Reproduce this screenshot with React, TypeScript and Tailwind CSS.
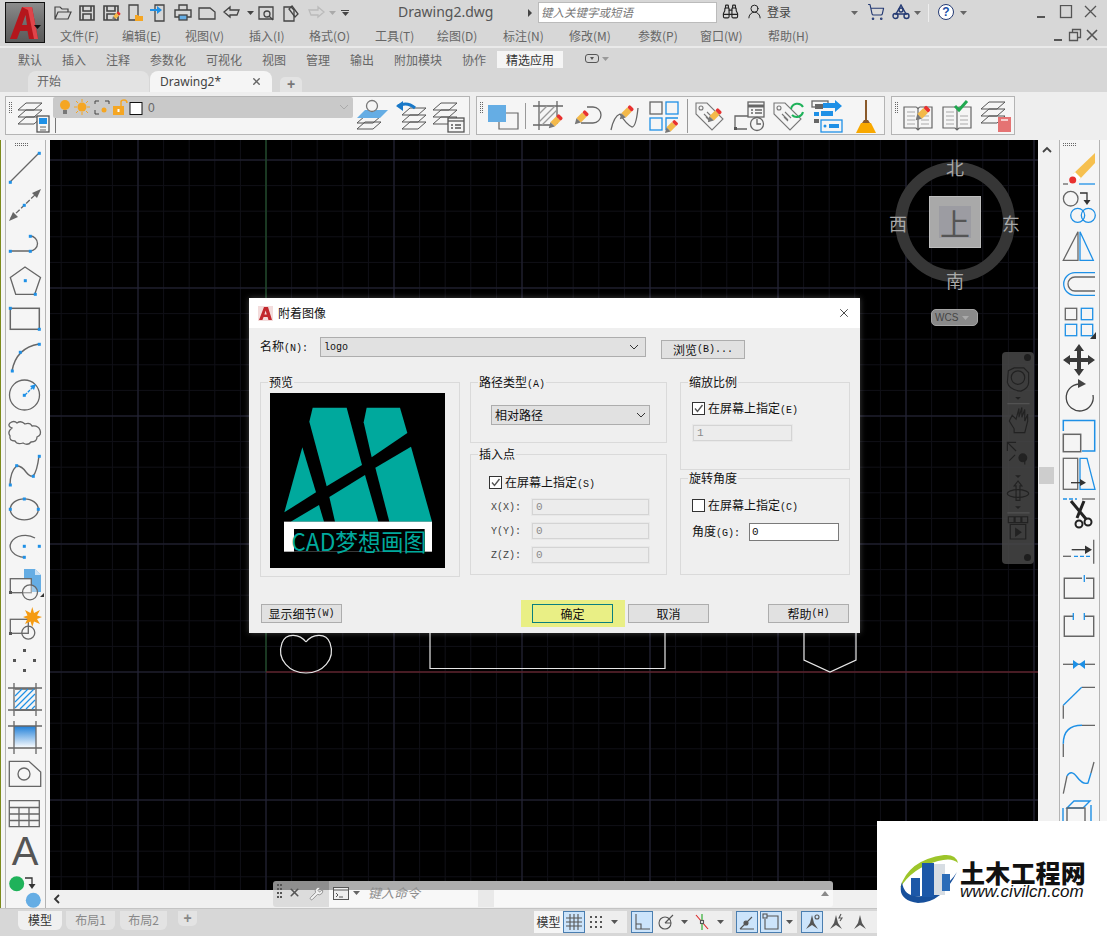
import type { ReactNode } from 'react'
import { Binoculars, ShoppingCart, UserRound, Wrench, X } from 'lucide-react'

const cjk = "font-['Noto_Sans_CJK_SC','Noto_Sans',sans-serif]"

function Ic({ s = 38, h, children }: { s?: number; h?: number; children: ReactNode }) {
  return (
    <svg width={s} height={h ?? s} viewBox={`0 0 ${s} ${h ?? s}`} fill="none" stroke="#666" strokeWidth="1.3" className="block overflow-visible shrink-0">
      {children}
    </svg>
  )
}

// small blue grip handle
const G = ({ x, y }: { x: number; y: number }) => <rect x={x - 1.5} y={y - 1.5} width="3" height="3" fill="#1e90e6" stroke="none" />

const Caret = ({ c = '#666' }: { c?: string }) => (
  <svg width="7" height="4" viewBox="0 0 7 4" className="block shrink-0"><polygon points="0,0 7,0 3.5,4" fill={c} /></svg>
)

const Pencil = ({ x, y, k = 1 }: { x: number; y: number; k?: number }) => (
  <g transform={`translate(${x} ${y}) rotate(45) scale(${k})`} stroke="none">
    <rect x="-3.5" y="-10" width="7" height="9" fill="#f3b94a" />
    <rect x="-3.5" y="-14" width="7" height="4" fill="#e8312f" rx="1.5" />
    <polygon points="-3.5,-1 3.5,-1 0,5" fill="#777" />
  </g>
)

const Sheet = ({ y }: { y: number }) => <path d={`M1 ${y + 7}L9 ${y}H25M1 ${y + 7}H17L25 ${y}`} stroke="#555" strokeWidth="1" />

const Tag = () => (
  <g stroke="#777" strokeWidth="1.1">
    <path d="M2 3H13L29 19L18 30L2 14Z" />
    <circle cx="7" cy="8" r="2" />
    <path d="M10 14L16 20M13 12L19 18M12 17L16 21" />
  </g>
)

const Book = () => (
  <g stroke="#666" strokeWidth="1.2">
    <path d="M2 7H14Q15 7 16 9Q17 7 18 7H30V28H18L16 30L14 28H2ZM16 9V29" />
    <path d="M5 12H13M5 16H13M5 20H13M5 24H13M19 16H27M19 20H27M19 24H27" stroke="#aaa" />
  </g>
)

const leftIcons: ReactNode[] = [
  <><path d="M4 34L33 5" /><G x={4.3} y={34.3} /><G x={33.3} y={5.3} /></>,
  <><path d="M5 32L32 6" strokeDasharray="5 2" /><polygon points="3,35 12,31 7,26" fill="#666" stroke="none" /><polygon points="35,3 26,7 31,12" fill="#666" stroke="none" /><G x={18.3} y={19.3} /></>,
  <><path d="M4 27H24M24 12A7.5 7.5 0 0 1 24 27" /><G x={4.3} y={27.3} /><G x={24.3} y={27.3} /><G x={24.3} y={12.3} /></>,
  <><polygon points="19,5 34.5,15.5 28.7,32.3 9.7,32.3 4.3,15.5" /><G x={19.3} y={18.7} /><G x={29.3} y={32.3} /></>,
  <><rect x="4.3" y="8.3" width="29" height="21" strokeWidth="1.5" /><G x={4.3} y={8.3} /><G x={33.3} y={29.3} /></>,
  <><path d="M6 33Q10 10 33 6" strokeWidth="1.5" /><G x={6.3} y={33} /><G x={14.3} y={14.3} /><G x={33.3} y={6.3} /></>,
  <><circle cx="18.5" cy="19" r="15" /><path d="M19 19L27 11" stroke="#1e90e6" strokeDasharray="3 1" /><polygon points="30,8 24,10 28,14" fill="#1e90e6" stroke="none" /><G x={18.3} y={19.3} /></>,
  <path d="M6 14Q1 12 4 9Q8 6 11 9Q15 6 19 10Q24 8 26 12Q32 11 34 16Q36 21 31 23Q31 28 25 28Q22 32 17 29Q11 31 9 27Q3 27 4 22Q1 18 6 14Z" />,
  <><path d="M4 33Q4 20 10.7 13.7Q16 14 20 20Q24 25 27 24Q31 20 33 4" strokeWidth="1.4" /><G x={4.3} y={33} /><G x={10.7} y={13.7} /><G x={27.3} y={24.3} /><G x={33.3} y={4.3} /></>,
  <><ellipse cx="18.3" cy="19.3" rx="14" ry="10.5" /><G x={18.3} y={9} /><G x={4.3} y={19.3} /><G x={32.3} y={19.3} /></>,
  <><path d="M29 10A15 11 0 1 0 18.3 29.3" /><G x={18.3} y={18.3} /><G x={33.3} y={18.3} /><G x={18.3} y={29.3} /></>,
  <><path d="M18 3H29L35 9V26H18Z" fill="#65ade4" stroke="none" /><path d="M29 3L35 9H29Z" fill="#cde3f5" stroke="none" /><rect x="4.3" y="12.7" width="21" height="14" fill="#f5f5f5" /><circle cx="24" cy="26.3" r="7.5" fill="#f5f5f5" fillOpacity=".4" /><rect x="3" y="25" width="3" height="3" fill="#555" stroke="none" /><polygon points="38,27 38,31 34,31" fill="#333" stroke="none" /></>,
  <><rect x="4.3" y="15.3" width="18" height="14" /><circle cx="22.3" cy="28.7" r="6.5" /><rect x="3" y="28" width="3" height="3" fill="#555" stroke="none" /><polygon points="26.3,3 28,9 34,6 31,11.5 36,13 31,15 34,20 28,17.5 26.3,23 24.5,17.5 19,20 21.5,15 17,13 21.5,11.5 19,6 24.5,9" fill="#f59b12" stroke="none" /></>,
  <g fill="#555" stroke="none"><rect x="17" y="7" width="3" height="3" /><rect x="7" y="17" width="3" height="3" /><rect x="27" y="17" width="3" height="3" /><rect x="17" y="27" width="3" height="3" /></g>,
  <><path d="M9 9L29 9M9 30H29" /><path d="M8 3V36M30 3V36M2 8H36M2 30H36" stroke="#666" /><path d="M9 16L16 9M9 22L22 9M9 28L28 9M14 29L29 14M20 29L29 20M26 29L29 26" stroke="#1e90e6" strokeWidth="1.2" /></>,
  <><defs><linearGradient id="gr" x1="0" y1="0" x2="0" y2="1"><stop offset="0" stopColor="#1f7fd8" /><stop offset="1" stopColor="#fff" /></linearGradient></defs><rect x="8" y="8" width="22" height="22" fill="url(#gr)" stroke="none" /><path d="M8 3V36M30 3V36M2 8H36M2 30H36" /></>,
  <><polygon points="3.3,5.3 23,5.3 34.7,16 34.7,30.3 3.3,30.3" /><circle cx="18" cy="18" r="6" /></>,
  <path d="M3.3 6.7H33.3V32.7H3.3ZM3.3 13.5H33.3M3.3 20H33.3M3.3 26.5H33.3M13 13.5V32.7M23 13.5V32.7" />,
  <text x="19" y="33" textAnchor="middle" fill="#555" stroke="none" fontSize="40" fontFamily="Liberation Sans">A</text>,
  <><circle cx="10.7" cy="13.7" r="7.5" fill="#1fb25a" stroke="none" /><circle cx="27.3" cy="30.3" r="7.5" fill="#65ade4" stroke="none" /><path d="M19 8H26V15" stroke="#333" /><polygon points="22.5,14 29.5,14 26,19" fill="#333" stroke="none" /></>,
]

const blue = '#1e90e6'
const rightIcons: ReactNode[] = [
  <><polygon points="35,2 35,12 19,29 13,23" fill="#f6c04f" stroke="none" /><polygon points="15,21 21,27 18,30 12,24" fill="#fff" stroke="none" /><circle cx="12.7" cy="29" r="3.5" fill="#e8312f" stroke="none" /><path d="M3 33H8" /><path d="M19 33H35" stroke={blue} /></>,
  <><circle cx="10.7" cy="9.7" r="7.3" /><path d="M20 4H27V12" stroke="#333" /><polygon points="23.5,11 30.5,11 27,16" fill="#333" stroke="none" /><circle cx="17.7" cy="26.3" r="7" stroke={blue} /><circle cx="28.3" cy="26.3" r="7" stroke={blue} /></>,
  <><polygon points="18,4.7 18,33.3 3.3,33.3" /><polygon points="20,4.7 20,33.3 33.3,33.3" stroke={blue} /></>,
  <><path d="M35 7.7H15A11.3 11.3 0 0 0 15 30.3H35" stroke={blue} /><path d="M35 12H15A7 7 0 0 0 15 26H35" /></>,
  <><rect x="5.3" y="5.3" width="11.4" height="11.4" /><rect x="21.3" y="5.3" width="11.4" height="11.4" stroke={blue} /><rect x="5.3" y="21.3" width="11.4" height="11.4" stroke={blue} /><rect x="21.3" y="21.3" width="11.4" height="11.4" stroke={blue} /><polygon points="36,29 36,36 30,36" fill="#333" stroke="none" /></>,
  <path d="M19 3L24 10H21V17H28V14L35 19L28 24V21H21V28H24L19 35L14 28H17V21H10V24L3 19L10 14V17H17V10H14Z" fill="#3a3a3a" stroke="none" />,
  <><path d="M19 5A13.5 13.5 0 1 0 33 16" stroke="#444" /><polygon points="18,0 18,9 26,5" fill="#444" stroke="none" /></>,
  <><path d="M3.3 14V3.5H34.7V34H22" stroke={blue} strokeWidth="1.5" /><rect x="3.3" y="17.3" width="17.4" height="17.4" strokeWidth="1.5" /></>,
  <><rect x="3.3" y="3.3" width="14.4" height="31" /><polygon points="20,3.3 27,3.3 35,34.3 20,34.3" stroke={blue} /><path d="M11 27.7H21" stroke="#333" /><polygon points="20,24 26,27.7 20,31" fill="#333" stroke="none" /></>,
  <><path d="M3 6H17" stroke={blue} strokeDasharray="4 2" /><path d="M22 6H35" /><path d="M11 8L26 26M24 8L17 25" stroke="#222" strokeWidth="3" /><circle cx="28" cy="29" r="3.5" stroke="#222" strokeWidth="2" /><circle cx="19" cy="31" r="3.5" stroke="#222" strokeWidth="2" /></>,
  <><path d="M11.7 18.7H26" stroke="#333" /><polygon points="25,14.5 32,18.7 25,23" fill="#333" stroke="none" /><path d="M3 25.3H11" /><path d="M14 25.3H32" stroke={blue} strokeDasharray="4 2" /><path d="M33.7 8.7V32.7" /></>,
  <><path d="M22 9.3H4.3V29.3H33.7V9.3H26" strokeWidth="1.4" /><path d="M24.3 6V13" stroke={blue} /></>,
  <><path d="M13.3 9.3H4.3V29.3H33.7V9.3H24.3" strokeWidth="1.4" /><path d="M13.3 6V13M24.3 6V13" stroke={blue} /></>,
  <><path d="M3 19.3H35" /><polygon points="13,15 19,19.3 13,24" fill={blue} stroke="none" /><polygon points="25,15 19,19.3 25,24" fill={blue} stroke="none" /></>,
  <><path d="M21.7 4.3H35M3.3 22.3V35.7" /><path d="M21.7 4.3L3.3 22.3" stroke={blue} /></>,
  <><path d="M22 4.3H35M3.3 22.7V36" /><path d="M22 4.3Q3.3 4.3 3.3 22.7" stroke={blue} strokeWidth="1.5" /></>,
  <><path d="M3.3 34.7L7 17" /><path d="M7 17Q11 10 17 18T28 24L31 14" stroke={blue} strokeWidth="1.4" /><path d="M31 14L34 3" /></>,
  <g stroke={blue} strokeWidth="1.4"><path d="M7 11L14 4H30L23 11H7ZM3 11V36M31 8V36" /><rect x="7" y="11" width="18" height="22" stroke="#666" /></g>,
]

const menus = [
  ['文件(F)', 'w-[62px]'], ['编辑(E)', 'w-[63px]'], ['视图(V)', 'w-[64px]'], ['插入(I)', 'w-[60px]'],
  ['格式(O)', 'w-[66px]'], ['工具(T)', 'w-[62px]'], ['绘图(D)', 'w-[66px]'], ['标注(N)', 'w-[66px]'],
  ['修改(M)', 'w-[69px]'], ['参数(P)', 'w-[62px]'], ['窗口(W)', 'w-[68px]'], ['帮助(H)', 'w-[60px]'],
]

const ribbonTabs = [
  ['默认', 'w-[44px]'], ['插入', 'w-[44px]'], ['注释', 'w-[44px]'], ['参数化', 'w-[56px]'], ['可视化', 'w-[56px]'],
  ['视图', 'w-[44px]'], ['管理', 'w-[44px]'], ['输出', 'w-[44px]'], ['附加模块', 'w-[68px]'], ['协作', 'w-[35px]'],
]

function Hot({ k }: { k: string }) {
  return <span className="font-['Liberation_Mono',monospace] text-[10px]">{k}</span>
}

function Group({ title, className, children }: { title: ReactNode; className: string; children?: ReactNode }) {
  return (
    <div className={`relative border border-[#dadada] ${className}`}>
      <div className="absolute -top-[9px] left-[7px] bg-[#efefef] px-[1px] leading-[16px] whitespace-nowrap">{title}</div>
      {children}
    </div>
  )
}

function Check({ on }: { on?: boolean }) {
  return (
    <svg width="13" height="13" viewBox="0 0 13 13" className="block shrink-0">
      <rect x=".5" y=".5" width="12" height="12" fill="#fff" stroke="#333" />
      {on && <path d="M3 6.5L5.5 9.5L10.5 3" fill="none" stroke="#555" strokeWidth="1.4" />}
    </svg>
  )
}

const Chevron = () => (
  <svg width="10" height="6" viewBox="0 0 10 6" className="block shrink-0"><path d="M1 1L5 5L9 1" fill="none" stroke="#333" /></svg>
)

function DisabledField({ value, className }: { value: string; className: string }) {
  return <div className={`h-[18px] border-2 border-[#e8e8e8] outline outline-1 -outline-offset-2 outline-[#d4d4d4] bg-[#ececec] pl-[3px] text-[11px] leading-[14px] text-[#8a8a8a] font-['Liberation_Mono',monospace] ${className}`}>{value}</div>
}

function Btn({ children, className = '' }: { children: ReactNode; className?: string }) {
  return <div className={`h-[19px] w-[81px] border border-[#adadad] bg-[#e1e1e1] flex items-center justify-center leading-none shrink-0 ${className}`}>{children}</div>
}

function ImageDialog() {
  return (
    <div className={`absolute left-[199px] top-[158px] w-[611px] h-[335px] bg-[#efefef] text-[12px] text-[#111] shadow-[0_0_6px_rgba(255,255,255,0.25)] ${cjk}`}>
      <div className="h-[30px] bg-white flex items-center pl-[9px] pr-[9px]">
        <svg width="15" height="15" viewBox="0 0 15 15" className="block"><rect width="15" height="15" fill="#f3dcdc" /><path d="M1 14L6 1H10L14 14H10.5L9.6 11H5.6L4.4 14ZM6.4 8.5H8.8L7.6 4.6Z" fill="#c2272d" /></svg>
        <span className="ml-[5px]">附着图像</span>
        <X className="ml-auto w-[14px] h-[14px] text-[#222]" strokeWidth={1.4} />
      </div>
      <div className="pl-[11px] pt-[9px]">
        <div className="flex h-[22px] items-start">
          <div className="w-[60px] leading-[18px]">名称<Hot k="(N):" /></div>
          <div className="w-[326px] h-[20px] border border-[#adadad] bg-[#e1e1e1] flex items-center justify-between pl-[3px] pr-[6px]">
            <span className="font-['Liberation_Mono',monospace] text-[10px]">logo</span>
            <Chevron />
          </div>
          <Btn className="ml-[15px] mt-[3px] w-[84px]"><span>浏览</span><Hot k="(B)..." /></Btn>
        </div>
        <div className="flex mt-[23px] h-[195px]">
          <Group title="预览" className="w-[200px] h-[195px]">
            <div className="ml-[9px] mt-[10px] w-[175px] h-[175px] bg-black">
              <svg width="175" height="175" viewBox="60 292 525 525" className="block">
                <g fill="#00a99d">
                  <polygon points="188,336 290,336 336,508 230,572 178,378" />
                  <polygon points="350,336 450,336 472,412 365,485 341,380" />
                  <polygon points="157,455 198,590 103,650" />
                  <polygon points="483,453 546,678 418,678 376,516" />
                  <polygon points="345,538 385,678 255,678 238,604" />
                  <polygon points="207,628 222,678 122,678" />
                </g>
                <rect x="102" y="678" width="444" height="90" fill="#fff" />
                <rect x="132" y="700" width="392" height="68" fill="#000" />
                <text x="124" y="765" fill="#00a99d" fontSize="72" fontFamily="Noto Sans CJK SC" textLength="405" lengthAdjust="spacingAndGlyphs">CAD梦想画图</text>
              </svg>
            </div>
          </Group>
          <div className="ml-[10px] w-[197px] flex flex-col gap-[11px]">
            <Group title={<>路径类型<Hot k="(A)" /></>} className="h-[61px] pt-[22px] pl-[20px]">
              <div className="w-[159px] h-[20px] border border-[#adadad] bg-[#e1e1e1] flex items-center justify-between pl-[3px] pr-[3px]">
                <span>相对路径</span>
                <Chevron />
              </div>
            </Group>
            <Group title="插入点" className="h-[121px] pl-[18px] pt-[20px]">
              <div className="flex items-center gap-[3px] h-[14px]"><Check on /><span>在屏幕上指定<Hot k="(S)" /></span></div>
              <div className="mt-[9px] flex flex-col gap-[6px] text-[#444]">
                {['X(X):', 'Y(Y):', 'Z(Z):'].map((l) => (
                  <div key={l} className="flex items-center pl-[2px]">
                    <span className="w-[40px] font-['Liberation_Mono',monospace] text-[10px]">{l}</span>
                    <DisabledField value="0" className="w-[119px]" />
                  </div>
                ))}
              </div>
            </Group>
          </div>
          <div className="ml-[13px] w-[170px] flex flex-col gap-[8px]">
            <Group title="缩放比例" className="h-[88px] pl-[11px] pt-[18px]">
              <div className="flex items-center gap-[3px] h-[14px]"><Check on /><span>在屏幕上指定<Hot k="(E)" /></span></div>
              <DisabledField value="1" className="w-[101px] mt-[9px]" />
            </Group>
            <Group title="旋转角度" className="h-[97px] pl-[11px] pt-[19px]">
              <div className="flex items-center gap-[3px] h-[14px]"><Check /><span>在屏幕上指定<Hot k="(C)" /></span></div>
              <div className="flex items-center mt-[10px]">
                <span className="w-[57px]">角度<Hot k="(G):" /></span>
                <div className="w-[90px] h-[18px] border border-[#7a7a7a] bg-white pl-[2px] text-[11px] leading-[16px] font-['Liberation_Mono',monospace]">0</div>
              </div>
            </Group>
          </div>
        </div>
        <div className="flex items-center mt-[23px] h-[27px] pl-[1px]">
          <Btn><span>显示细节</span><Hot k="(W)" /></Btn>
          <div className="ml-[179px] w-[104px] h-[27px] bg-[#e9ef85] pl-[11px] flex items-center shrink-0">
            <div className="w-[81px] h-[19px] border border-[#0a7f7f] flex items-center justify-center leading-none">确定</div>
          </div>
          <Btn className="ml-[3px]">取消</Btn>
          <Btn className="ml-[59px]"><span>帮助</span><Hot k="(H)" /></Btn>
        </div>
      </div>
    </div>
  )
}

function CanvasDrawing() {
  const minorX = Array.from({ length: 40 }, (_, i) => 11.2 + i * 25.6)
  const minorY = Array.from({ length: 30 }, (_, i) => 20 + i * 25.6)
  return (
    <svg width="988" height="750" className="absolute inset-0 block" fill="none">
      {minorX.map((x) => <path key={x} d={`M${x} 0V750`} stroke="#101017" />)}
      {minorY.map((y) => <path key={y} d={`M0 ${y}H988`} stroke="#101017" />)}
      {[88, 216, 344, 472, 600, 728, 856, 984].map((x) => <path key={x} d={`M${x} 0V750`} stroke="#26263a" />)}
      {[20, 148, 276, 404, 532, 660].map((y) => <path key={y} d={`M0 ${y}H988`} stroke="#26263a" />)}
      <path d="M216 0V532" stroke="#1f5a22" />
      <path d="M216 532H988" stroke="#7a2226" />
      <g stroke="#e6e6e6" strokeWidth="1.2">
        <path d="M256 502C250 494 236 492 232 503C226 520 240 533 256 533C272 533 286 520 280 503C276 492 262 494 256 502" />
        <path d="M380 490V528.5H615V490" />
        <path d="M754 490V520L780 532L806 520V490" />
      </g>
    </svg>
  )
}

function ViewCube() {
  return (
    <div className={`absolute left-[835px] top-[15px] w-[140px] h-[175px] ${cjk}`}>
      <svg width="140" height="140" viewBox="0 0 140 140" className="absolute left-0 top-0 block" fill="none">
        <circle cx="70" cy="67" r="54" stroke="#363636" strokeWidth="12" />
      </svg>
      <div className="absolute left-[44px] top-[41px] w-[52px] h-[52px] bg-[#a9a9a9] border border-[#bdbdbd] flex items-center justify-center">
        <div className="w-[32px] h-[32px] bg-[#9c9ca2] flex items-center justify-center text-[30px] leading-none text-[#555]">上</div>
      </div>
      <span className="absolute left-[61px] top-0 text-[18px] leading-[24px] text-[#a8a8a8]">北</span>
      <span className="absolute left-[4px] top-[56px] text-[18px] leading-[24px] text-[#a8a8a8]">西</span>
      <span className="absolute left-[117px] top-[56px] text-[18px] leading-[24px] text-[#a8a8a8]">东</span>
      <span className="absolute left-[61px] top-[113px] text-[18px] leading-[24px] text-[#a8a8a8]">南</span>
      <div className="absolute left-[46px] top-[154px] w-[47px] h-[17px] rounded-[5px] bg-[#8a8a8a] border border-[#a5a5a5] flex items-center pl-[3px] gap-[4px] font-['Liberation_Sans'] text-[10px] text-[#444]">
        WCS
        <Caret c="#aaa" />
      </div>
    </div>
  )
}

function NavBar() {
  return (
    <div className="absolute left-[952px] top-[212px] w-[32px] h-[212px] rounded-[4px] bg-[#484848]/85 flex flex-col items-center pt-[2px]">
      <div className="self-end mr-[3px] w-[7px] h-[7px] rounded-full bg-[#1e1e1e]" />
      <svg width="28" height="196" viewBox="0 0 28 196" fill="none" stroke="#222" strokeWidth="1.2" className="block mt-[4px]">
        <path d="M4 6L10 3H20L25 8V18Q25 24 17 27Q5 26 3 18Z" />
        <circle cx="14" cy="13" r="7" />
        <path d="M3 40H26" stroke="#555" />
        <polygon points="11,33 17,33 14,36" fill="#222" stroke="none" />
        <path d="M5 58L10 66V70H21L24 58V51L21 58V46L18 54V44L15 54V45L12 56L8 52Z" />
        <path d="M3 80L12 89M12 80H3V89M21 98V103M5 99L11 93" />
        <circle cx="19" cy="96" r="4" fill="#222" />
        <polygon points="11,114 17,114 14,117" fill="#222" stroke="none" />
        <path d="M14 120L10 125H12V140H16V125H18Z" />
        <ellipse cx="14" cy="133" rx="11" ry="4" />
        <polygon points="11,146 17,146 14,149" fill="#222" stroke="none" />
        <path d="M3 153H26" stroke="#555" />
        <path d="M4 157H10V163H4ZM11 157H17V163H11ZM18 157H24V163H18ZM6 165H22V180H6Z" />
        <polygon points="11,168 11,178 18,173" fill="#222" stroke="none" />
      </svg>
      <div className="mt-auto mb-[3px] self-end mr-[3px] w-[7px] h-[7px] rounded-full bg-[#1e1e1e]" />
    </div>
  )
}

function CommandLine() {
  return (
    <div className={`absolute left-[273px] top-[741px] w-[560px] h-[26px] flex ${cjk}`}>
      <div className="w-[56px] bg-[linear-gradient(#8e8e8e_0,#8e8e8e_9px,#dcdcdc_9px)] rounded-l-[3px] flex items-start gap-[5px] pl-[4px] pt-[3px] text-[#555]">
        <svg width="6" height="18" viewBox="0 0 6 18" className="block"><g fill="#555"><rect width="2" height="2" /><rect x="3" width="2" height="2" /><rect y="4" width="2" height="2" /><rect x="3" y="4" width="2" height="2" /><rect y="8" width="2" height="2" /><rect x="3" y="8" width="2" height="2" /><rect y="12" width="2" height="2" /><rect x="3" y="12" width="2" height="2" /></g></svg>
        <X className="w-[13px] h-[13px] mt-[2px]" strokeWidth={3} />
        <Wrench className="w-[15px] h-[15px] ml-[3px] mt-[2px]" strokeWidth={1.4} color="#888" fill="#f2f2f2" />
      </div>
      <div className="flex-1 flex flex-col relative">
        <div className="h-[9px] bg-[#adadad] rounded-tr-[3px]" />
        <div className="h-[17px] bg-[#f8f8f8] rounded-br-[3px]" />
        <div className="absolute left-[149px] top-[9px] w-[16px] h-[17px] bg-[#e9e9e9]" />
        <div className="absolute left-0 top-[4px] flex items-center h-[16px]">
          <svg width="18" height="13" viewBox="0 0 18 13" fill="none" stroke="#555" className="block ml-[4px]"><rect x=".5" y=".5" width="15" height="12" fill="#eee" /><path d="M0 3H16M3 6L5 8L3 10M6 10H10" /></svg>
          <div className="ml-[2px]"><Caret c="#666" /></div>
          <span className="ml-[8px] italic text-[13px] leading-[16px] text-[#8e8e8e]">键入命令</span>
        </div>
        <svg width="8" height="5" viewBox="0 0 8 5" className="absolute right-[4px] top-[10px] block"><polygon points="0,5 8,5 4,0" fill="#8a8a8a" /></svg>
      </div>
    </div>
  )
}

function StatusBtn({ on, children }: { on?: boolean; children: ReactNode }) {
  return (
    <div className={`w-[22px] h-[22px] flex items-center justify-center shrink-0 ${on ? 'bg-[#cce4fb] border border-[#4a7eb0]' : ''}`}>
      <svg width="18" height="18" viewBox="0 0 18 18" fill="none" stroke="#555" strokeWidth="1.1" className="block">{children}</svg>
    </div>
  )
}

const StatusCaret = () => <div className="w-[14px] flex justify-center shrink-0"><Caret c="#555" /></div>

const Anno = ({ extra }: { extra?: ReactNode }) => (
  <>
    <path d="M9 2L11 10L15 16L9 12L3 16L7 10Z" fill="#555" stroke="none" />
    {extra}
  </>
)

function Watermark() {
  return (
    <div className={`absolute left-[877px] top-[821px] w-[230px] h-[115px] bg-white ${cjk}`}>
      <svg width="62" height="52" viewBox="0 0 62 52" className="absolute left-[21px] top-[33px] block" fill="none">
        <path d="M2 34Q10 6 46 1Q58 0 60 9Q54 3 40 7Q14 14 2 34Z" fill="#9dc52a" />
        <path d="M4 28Q-2 46 20 49Q44 49 59 18Q46 38 24 42Q6 44 4 28Z" fill="#17509c" />
        <rect x="24" y="9" width="12" height="34" fill="#1c58a8" />
        <rect x="13" y="24" width="9" height="18" fill="#1c58a8" />
        <rect x="36" y="10" width="11" height="31" fill="#d7dde3" />
        <rect x="44" y="20" width="8" height="17" fill="#2b6cb8" />
      </svg>
      <span className="absolute left-[83px] top-[39px] text-[25px] leading-[24px] font-black tracking-[0.2px] text-[#111] whitespace-nowrap">土木工程网</span>
      <span className="absolute left-[83px] top-[63px] font-['Liberation_Sans'] italic text-[17px] leading-[16px] text-[#111] whitespace-nowrap">www.civilcn.com</span>
    </div>
  )
}

function QuickAccess() {
  const cell = 'w-[24px] flex justify-center shrink-0'
  return (
    <>
      <div className={cell}><Ic s={18}><path d="M1 15V3H6L8 5H14V8M1 15L4 8H17L14 15Z" strokeWidth="1.2" stroke="#444" /></Ic></div>
      <div className={cell}><Ic s={18}><path d="M2 2H16V16H2ZM5 2V7H13V2M5 16V10H13V16" stroke="#444" strokeWidth="1.6" /></Ic></div>
      <div className={cell}><Ic s={18}><path d="M2 2H16V16H2ZM5 2V7H13V2M5 16V10H13V16" stroke="#444" strokeWidth="1.6" /><Pencil x={12} y={14} k={0.55} /></Ic></div>
      <div className={cell}><Ic s={18}><path d="M3 1H12V16H3Z" stroke="#444" /><path d="M9 11H12L13 12H17V17H9Z" fill="#f5a623" stroke="none" /></Ic></div>
      <div className={cell}><Ic s={18}><path d="M5 1H14V17H5Z" stroke="#444" /><path d="M0 6H8" stroke="#1e90e6" strokeWidth="2" /><polygon points="7,2 12,6 7,10" fill="#1e90e6" stroke="none" /></Ic></div>
      <div className={cell}><Ic s={18}><path d="M5 6V1H13V6M5 13H1V6H17V13H13" stroke="#444" strokeWidth="1.4" /><rect x="5" y="11" width="8" height="5" fill="#65ade4" stroke="#444" /></Ic></div>
      <div className={cell}><Ic s={18}><path d="M1 4H12L17 8V15H1Z" stroke="#444" /></Ic></div>
      <div className="w-[26px] flex justify-center shrink-0"><Ic s={18}><path d="M1 8L7 3V6H16L14 11H7V13Z" stroke="#444" /></Ic></div>
      <div className="w-[10px] flex justify-center shrink-0"><Caret c="#444" /></div>
      <div className="w-[24px] flex justify-center shrink-0"><Ic s={18}><path d="M1 3H15V15H1Z" stroke="#444" /><circle cx="9" cy="10" r="3" stroke="#444" /><path d="M11 12L15 16" stroke="#444" /></Ic></div>
      <div className="w-[26px] flex justify-center shrink-0"><Ic s={18}><path d="M1 3H8L11 6V17H1Z" stroke="#444" /><path d="M9 2L15 10L12 13L6 5Z" stroke="#444" /></Ic></div>
      <div className="w-[22px] flex justify-center shrink-0"><Ic s={18}><path d="M17 8L11 3V6H2L4 11H11V13Z" stroke="#bbb" /></Ic></div>
      <div className="w-[10px] flex justify-center shrink-0"><Caret c="#aaa" /></div>
      <div className="w-[16px] flex flex-col items-center gap-[1px] shrink-0"><div className="w-[8px] h-[1px] bg-[#444]" /><Caret c="#444" /></div>
    </>
  )
}

function TopToolbars() {
  const box = 'h-[39px] border border-[#b4b4b4] bg-[#f5f5f5] flex items-center relative shrink-0'
  const grip = <div className="absolute left-[3px] top-[5px] w-[3px] h-[11px] border-x border-dotted border-[#666]" />
  return (
    <>
      <div className={`${box} w-[465px]`}>
        {grip}
        <div className="ml-[11px] shrink-0">
          <Ic s={32}><Sheet y={3} /><Sheet y={10} /><Sheet y={17} /><rect x="20" y="16" width="12" height="16" fill="#f5f5f5" stroke="#555" /><rect x="22" y="18" width="8" height="6" fill="#1e90e6" stroke="none" /><path d="M23 27H29M23 30H29" stroke="#555" strokeWidth=".9" /></Ic>
        </div>
        <div className="ml-[4px] w-[300px] self-start">
          <div className="h-[21px] bg-[#c9c9c9] rounded-[2px] flex items-center pl-[6px] pr-[5px]">
            <svg width="84" height="17" viewBox="0 0 84 17" className="block shrink-0" fill="none">
              <circle cx="6" cy="6" r="5" fill="#f5a623" /><rect x="4" y="11" width="4" height="4" fill="#777" />
              <circle cx="23" cy="8" r="4.5" fill="#f5a623" /><path d="M23 0V3M23 13V16M15 8H18M28 8H31M17 2L19 4M27 12L29 14M29 2L27 4M19 12L17 14" stroke="#f5a623" />
              <path d="M36 5V2H40M46 2H50V5M36 11V15H40" stroke="#444" /><circle cx="45" cy="11" r="2.5" fill="#f5a623" />
              <rect x="54" y="7" width="11" height="9" fill="#f5a623" /><path d="M62 7V3Q62 1 65 1Q68 1 68 4" stroke="#f5a623" strokeWidth="1.5" /><rect x="58.5" y="10" width="2" height="3" fill="#fff" />
              <rect x="71" y="3.5" width="12" height="12" fill="#fff" stroke="#111" strokeWidth="1" />
            </svg>
            <span className="ml-[5px] text-[12px] text-[#666] font-['Liberation_Sans']">0</span>
            <svg width="8" height="5" viewBox="0 0 8 5" fill="none" stroke="#aaa" className="block ml-auto"><path d="M0 0L4 4L8 0" /></svg>
          </div>
          <div className="ml-[2px] w-[1px] h-[15px] bg-[#777]" />
        </div>
        <div className="ml-[3px] shrink-0">
          <Ic s={32}><Sheet y={22} /><Sheet y={16} /><polygon points="1,14 9,6 32,6 24,14" fill="#65ade4" stroke="none" transform="translate(0 4)" /><circle cx="16" cy="6" r="5.5" fill="#f5f5f5" stroke="#777" /></Ic>
        </div>
        <div className="ml-[7px] shrink-0">
          <Ic s={32}><g transform="translate(6 0)"><Sheet y={22} /><Sheet y={15} /><Sheet y={8} /></g><path d="M3 6Q12 1 20 8" stroke="#1878c8" strokeWidth="3" /><polygon points="8,1 1,6 8,11" fill="#1878c8" stroke="none" /></Ic>
        </div>
        <div className="ml-[5px] shrink-0">
          <Ic s={32}><Sheet y={3} /><Sheet y={10} /><Sheet y={17} /><rect x="16" y="18" width="16" height="14" fill="#f5f5f5" stroke="#555" /><path d="M16 21H32" stroke="#555" /><path d="M19 25H21M23 25H29M19 28H21M23 28H29" stroke="#555" /></Ic>
        </div>
      </div>
      <div className={`${box} ml-[6px] w-[409px]`}>
        {grip}
        <div className="ml-[10px] shrink-0">
          <Ic s={32}><rect x="1" y="5" width="18" height="17" fill="#65ade4" stroke="none" /><path d="M19 13H31V29H12V22" strokeWidth="1.2" /></Ic>
        </div>
        <div className="ml-[6px] w-[1px] h-[26px] bg-[#999] shrink-0" />
        <div className="ml-[6px] flex gap-[7px] shrink-0">
          <Ic s={32}><path d="M7 1V30M25 1V24M1 6H31M1 25H20" /><path d="M7 14L15 6M7 22L23 6M10 25L25 10" stroke="#999" /><Pencil x={20} y={25} k={0.9} /></Ic>
          <Ic s={32}><path d="M10 23H22A8 8 0 0 0 22 7H16" /><Pencil x={7} y={21} k={0.9} /></Ic>
          <Ic s={32}><path d="M1 30Q4 16 10 14Q16 24 22 27Q26 27 28 8" /><Pencil x={13} y={16} k={0.9} /></Ic>
          <Ic s={32}><rect x="1" y="2" width="12" height="12" /><rect x="17" y="2" width="12" height="12" stroke={blue} /><rect x="1" y="18" width="12" height="12" stroke={blue} /><path d="M29 18H17V30" stroke={blue} /><Pencil x={19} y={30} k={0.85} /></Ic>
        </div>
        <div className="ml-[6px] w-[1px] h-[34px] bg-[#999] shrink-0" />
        <div className="ml-[6px] flex gap-[7px] shrink-0">
          <Ic s={32}><Tag /><Pencil x={17} y={19} k={0.9} /></Ic>
          <Ic s={32}><rect x="15" y="2" width="16" height="15" fill="#f5f5f5" /><path d="M15 6H31" strokeWidth="3" /><path d="M18 10H20M22 10H29M18 13H20M22 13H29" /><path d="M15 16H2V29H14" /><circle cx="24" cy="24" r="6.5" /><path d="M24 19V24H28" /><rect x="1" y="27" width="3" height="3" fill="#555" stroke="none" /></Ic>
          <Ic s={32}><Tag /><path d="M19 9A6.5 6.5 0 0 1 31 7M31 12A6.5 6.5 0 0 1 20 15" stroke="#1fb25a" strokeWidth="2" /></Ic>
          <Ic s={32}><rect x="1" y="1" width="16" height="6" fill="#f5f5f5" /><rect x="4" y="4" width="8" height="5" fill="#666" stroke="none" /><rect x="3" y="12" width="5" height="4" fill="#1e90e6" stroke="none" /><rect x="10" y="11" width="12" height="5" fill="#1e90e6" stroke="none" /><rect x="3" y="19" width="5" height="4" fill="#666" stroke="none" /><polygon points="12,3 24,3 24,0 31,6 24,12 24,8 12,8" fill="#1e90e6" stroke="none" /><rect x="10" y="20" width="21" height="12" fill="#f5f5f5" stroke={blue} /><circle cx="14" cy="26" r="1.5" fill={blue} stroke="none" /><rect x="18" y="24" width="10" height="4" fill={blue} stroke="none" /></Ic>
          <Ic s={32}><path d="M16 0V22" stroke="#8a5a2b" strokeWidth="2" /><polygon points="14,20 18,20 20,23 12,23" fill="#8a5a2b" stroke="none" /><polygon points="11,23 21,23 26,33 6,33" fill="#f8a800" stroke="none" /></Ic>
        </div>
      </div>
      <div className={`${box} ml-[6px] w-[124px]`}>
        {grip}
        <div className="ml-[10px] flex gap-[7px] shrink-0">
          <Ic s={32}><Book /><Pencil x={17} y={17} k={0.95} /></Ic>
          <Ic s={32}><Book /><path d="M14 6L18 10L26 1" stroke="#1fa84f" strokeWidth="3" /></Ic>
          <Ic s={32}><Sheet y={2} /><Sheet y={9} /><Sheet y={16} /><rect x="18" y="17" width="13" height="15" fill="#e57373" stroke="none" /><path d="M21 20H28" stroke="#fff" /></Ic>
        </div>
      </div>
    </>
  )
}

export default function App() {
  return (
    <div className={`relative w-[1107px] h-[936px] overflow-hidden flex flex-col bg-[#d7d7d7] ${cjk}`}>
      {/* title + menu */}
      <div className="h-[46px] flex shrink-0 pl-[5px]">
        <div className="mt-[2px] w-[40px] h-[41px] border border-[#111] bg-gradient-to-b from-[#8c8c8c] via-[#6f6f6f] to-[#5a5a5a] relative shrink-0">
          <svg width="34" height="37" viewBox="0 0 34 37" className="absolute left-[2px] top-[1px] block">
            <path d="M2 35L14 3H24L30 35H21L19.5 27H12L9 35ZM14 21H19L17.5 11Z" fill="#b5161c" />
            <path d="M14 3H24L30 35H26L20 6Z" fill="#e0454a" />
          </svg>
          <div className="absolute right-[3px] top-[22px]"><Caret c="#111" /></div>
        </div>
        <div className="flex-1 flex flex-col">
          <div className="h-[25px] flex items-center relative">
            <div className="ml-[6px] flex items-center h-[20px]">
              <QuickAccess />
            </div>
            <span className="absolute left-[353px] top-[2px] font-['Noto_Sans'] text-[14px] leading-[20px] text-[#555]">Drawing2.dwg</span>
            <div className="absolute left-[483px] top-[9px] w-0 h-0 border-y-[4px] border-l-[4px] border-y-transparent border-l-[#444]" />
            <div className="absolute left-[493px] top-[2px] w-[179px] h-[21px] bg-white border border-[#bbb] pl-[2px] italic text-[11.5px] leading-[19px] text-[#777]">键入关键字或短语</div>
            <Binoculars className="absolute left-[677px] top-[3px] w-[17px] h-[17px] text-[#222]" strokeWidth={1.6} />
            <UserRound className="absolute left-[701px] top-[3px] w-[17px] h-[17px] text-[#222]" strokeWidth={1.4} />
            <span className="absolute left-[722px] top-[3px] text-[12px] leading-[18px] text-[#444]">登录</span>
            <div className="absolute left-[806px] top-[11px]"><Caret /></div>
            <ShoppingCart className="absolute left-[822px] top-[3px] w-[18px] h-[18px] text-[#243a73]" strokeWidth={1.5} />
            <svg width="18" height="16" viewBox="0 0 18 16" fill="none" stroke="#243a73" strokeWidth="1.4" className="absolute left-[847px] top-[4px] block"><path d="M9 1L14 10H4Z" /><circle cx="3.5" cy="12" r="2.5" /><circle cx="14.5" cy="12" r="2.5" /><circle cx="9" cy="6" r="2" /></svg>
            <div className="absolute left-[869px] top-[11px]"><Caret /></div>
            <div className="absolute left-[883px] top-[4px] w-[1px] h-[18px] bg-[#eee]" />
            <div className="absolute left-[893px] top-[4px] w-[16px] h-[16px] rounded-full border border-[#243a73] bg-white flex items-center justify-center font-['Liberation_Sans'] font-bold text-[12px] leading-none text-[#1d4fa8]">?</div>
            <div className="absolute left-[915px] top-[11px]"><Caret /></div>
            <svg width="68" height="14" viewBox="0 0 68 14" fill="none" stroke="#555" strokeWidth="1.3" className="absolute left-[992px] top-[5px] block"><path d="M0 12H8" strokeWidth="2" /><rect x="23.5" y=".5" width="11" height="12" /><path d="M48 1L59 12M59 1L48 12" /></svg>
          </div>
          <div className="flex-1 flex items-center pl-[15px] text-[12px] text-[#666] relative">
            {menus.map(([m, w]) => <span key={m} className={`${w} shrink-0 whitespace-nowrap`}>{m}</span>)}
            <svg width="44" height="14" viewBox="0 0 44 14" fill="none" stroke="#555" strokeWidth="1.3" className="absolute left-[1009px] top-[3px] block"><path d="M0 12H8" strokeWidth="2" /><path d="M15.5 4.5H23.5V12.5H15.5ZM18.5 4.5V1.5H26.5V9.5H23.5" /><path d="M33 2L43 12M43 2L33 12" strokeWidth="1.6" /></svg>
          </div>
        </div>
      </div>

      {/* ribbon tabs */}
      <div className="h-[24px] shrink-0 border-t-2 border-[#eaeaea] flex items-start pl-[18px] pt-[3px] text-[12px] leading-[17px] text-[#666]">
        {ribbonTabs.map(([t, w]) => <span key={t} className={`${w} shrink-0`}>{t}</span>)}
        <span className="w-[66px] h-[17px] bg-[#f5f5f5] text-center text-[#333] shrink-0">精选应用</span>
        <svg width="14" height="10" viewBox="0 0 14 10" fill="none" stroke="#555" className="block ml-[22px] mt-[3px]"><rect x=".5" y=".5" width="13" height="8" rx="2.5" /><polygon points="5,3 9,3 7,6" fill="#555" stroke="none" /></svg>
        <div className="ml-[3px] mt-[6px]"><Caret c="#999" /></div>
      </div>

      {/* document tabs */}
      <div className="h-[22px] shrink-0 flex items-end pl-[28px] text-[12px]">
        <div className="w-[121px] h-[21px] bg-[#e3e3e3] rounded-t-[8px] pl-[9px] text-[#666] leading-[20px]">开始</div>
        <div className="w-[122px] h-[21px] bg-[#f5f5f5] rounded-t-[8px] ml-[1px] pl-[10px] pr-[10px] text-[#444] leading-[20px] flex items-center justify-between font-['Noto_Sans']">
          Drawing2*
          <X className="w-[11px] h-[11px] text-[#666]" strokeWidth={3} />
        </div>
        <div className="ml-[8px] w-[22px] h-[15px] bg-[#e3e3e3] rounded-t-[5px] text-center text-[14px] leading-[15px] font-bold text-[#777] font-['Liberation_Sans']">+</div>
      </div>

      {/* toolbars */}
      <div className="h-[48px] shrink-0 bg-[#eeeeee] pl-[5px] pt-[4px] flex items-start">
        <TopToolbars />
      </div>

      {/* main */}
      <div className="relative h-[768px] shrink-0 flex bg-[#f5f5f5]">
        <div className="w-[5px] border-l border-[#7c8a1c] shrink-0" />
        <div className="w-[41px] shrink-0 border-x border-[#b4b4b4] bg-[#f5f5f5] h-[768px] pt-[8px] relative">
          <div className="absolute left-[9px] top-[3px] w-[13px] h-[3px] border-y border-dotted border-[#666]" />
          {leftIcons.map((ic, i) => <div key={i} className="h-[38px]"><Ic>{ic}</Ic></div>)}
        </div>
        <div className="w-[4px] shrink-0" />
        <div className="w-[988px] shrink-0 flex flex-col">
          <div className="relative h-[750px] bg-black overflow-hidden shrink-0">
            <CanvasDrawing />
            <ViewCube />
            <NavBar />
            <ImageDialog />
          </div>
          <div className="h-[18px] bg-[#f0f0f0] pl-[3px] flex items-center">
            <svg width="8" height="10" viewBox="0 0 8 10" fill="none" stroke="#333" strokeWidth="1.8" className="block"><path d="M6 1L2 5L6 9" /></svg>
          </div>
        </div>
        <div className="w-[21px] shrink-0 bg-[#f1f1f1] relative">
          <svg width="10" height="7" viewBox="0 0 10 7" fill="none" stroke="#444" strokeWidth="1.8" className="absolute left-[4px] top-[6px] block"><path d="M1 6L5 2L9 6" /></svg>
          <div className="absolute left-[1px] top-[327px] w-[15px] h-[17px] bg-[#cdcdcd]" />
        </div>
        <div className="w-[41px] shrink-0 border-x border-[#b4b4b4] pt-[11px] h-[768px] relative overflow-hidden">
          <div className="absolute left-[3px] top-[3px] w-[13px] h-[3px] border-y border-dotted border-[#666]" />
          {rightIcons.map((ic, i) => <div key={i} className="h-[38px]"><Ic>{ic}</Ic></div>)}
        </div>
        <div className="w-[7px] shrink-0" />
        <CommandLine />
      </div>

      {/* layout tabs and status */}
      <div className="flex-1 flex border-t border-[#c4c4c4] pt-[2px] bg-[#d7d7d7] text-[12px]">
        <div className="w-[534px] shrink-0 flex items-start pl-[18px] text-[#888] leading-[18px]">
          <span className="w-[44px] h-[19px] bg-[#f0f0f0] rounded-b-[6px] text-center text-[#333]">模型</span>
          <span className="ml-[4px] w-[49px] h-[19px] bg-[#e3e3e3] rounded-b-[6px] text-center">布局1</span>
          <span className="ml-[5px] w-[47px] h-[19px] bg-[#e3e3e3] rounded-b-[6px] text-center">布局2</span>
          <span className="ml-[11px] w-[19px] h-[15px] bg-[#e3e3e3] rounded-b-[5px] text-center text-[14px] leading-[14px] font-bold font-['Liberation_Sans']">+</span>
        </div>
        <div className="flex items-start gap-[4px]">
          <div className="h-[22px] w-[93px] bg-[#eeeeee] flex items-center">
            <span className="w-[29px] h-full bg-[#f5f5f5] text-center leading-[22px] text-[#333] shrink-0">模型</span>
            <StatusBtn on><path d="M5 1V17M9 1V17M13 1V17M1 5H17M1 9H17M1 13H17" /></StatusBtn>
            <StatusBtn><g fill="#555" stroke="none"><rect x="3" y="3" width="2" height="2" /><rect x="8" y="3" width="2" height="2" /><rect x="13" y="3" width="2" height="2" /><rect x="3" y="8" width="2" height="2" /><rect x="8" y="8" width="2" height="2" /><rect x="13" y="8" width="2" height="2" /><rect x="3" y="13" width="2" height="2" /><rect x="8" y="13" width="2" height="2" /><rect x="13" y="13" width="2" height="2" /></g></StatusBtn>
            <StatusCaret />
          </div>
          <div className="h-[22px] w-[101px] bg-[#eeeeee] flex items-center">
            <StatusBtn on><path d="M3 1V16H17M3 11H8V16" /></StatusBtn>
            <div className="ml-[2px]"><StatusBtn><circle cx="8" cy="10" r="6" /><path d="M8 10L16 2M8 10H14" /></StatusBtn></div>
            <StatusCaret />
            <StatusBtn><path d="M3 2L15 16" stroke="#d22" /><path d="M9 1V17" stroke="#2a2" /><rect x="7.5" y="7.5" width="3" height="3" fill="#eee" /></StatusBtn>
            <StatusCaret />
          </div>
          <div className="h-[22px] w-[61px] bg-[#eeeeee] flex items-center">
            <StatusBtn on><path d="M2 16H16M2 16L14 4" /><circle cx="8" cy="10" r="2" fill="#555" /></StatusBtn>
            <div className="ml-[2px]"><StatusBtn on><path d="M5 3H16V16H3V6" /><rect x="1" y="1" width="4" height="4" /></StatusBtn></div>
            <StatusCaret />
          </div>
          <div className="h-[22px] w-[78px] bg-[#eeeeee] flex items-center gap-[2px]">
            <StatusBtn on><Anno extra={<circle cx="14" cy="4" r="2" />} /></StatusBtn>
            <StatusBtn><Anno extra={<path d="M14 1L12 5H15L13 8" />} /></StatusBtn>
            <StatusBtn><Anno /></StatusBtn>
          </div>
        </div>
      </div>

      <Watermark />
    </div>
  )
}
